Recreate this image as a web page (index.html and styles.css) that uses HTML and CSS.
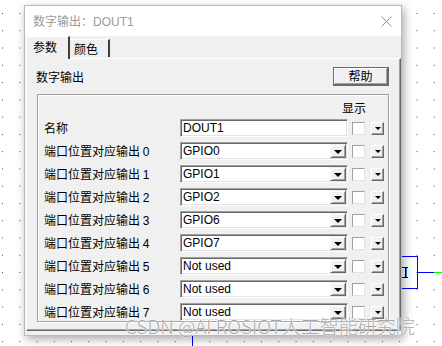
FILE: index.html
```html
<!DOCTYPE html>
<html lang="zh-CN">
<head>
    <meta charset="UTF-8">
    <title>数字输出：DOUT1</title>
    <link rel="stylesheet" href="styles.css">
</head>
<body>
    <svg class="canvas" width="442" height="346" viewBox="0 0 442 346">
        <defs>
            <pattern id="dots" x="2" y="13" width="17.27" height="17.27" patternUnits="userSpaceOnUse">
                <rect x="0" y="0" width="1" height="1" fill="#008000"/>
            </pattern>
        </defs>
        <rect width="442" height="346" fill="url(#dots)" shape-rendering="crispEdges"/>
        <g shape-rendering="crispEdges" stroke-width="1" fill="none">
            <path d="M400 256.5H417.5V288.5H400" stroke="#0000ff"/>
            <path d="M417.5 272.5H434" stroke="#0000ff"/>
            <path d="M434 272.5H442" stroke="#00ff00"/>
            <path d="M192.5 330V346" stroke="#0000ff"/>
            <path d="M402 267.5H408M405.5 267V278M402 277.5H408" stroke="#000"/>
            <path d="M406.5 268V277" stroke="#2080ff"/>
        </g>
    </svg>

    <div class="dialog">
        <div class="titlebar">
            <span class="title">数字输出：DOUT1</span>
            <svg class="close" width="11" height="11" viewBox="0 0 11 11">
                <path d="M0.5 0.5L10.5 10.5M10.5 0.5L0.5 10.5" stroke="#8c8c8c" stroke-width="1"/>
            </svg>
        </div>
        <div class="dlg-body">
            <div class="tabs">
                <div class="tab active">参数</div>
                <div class="tab">颜色</div>
            </div>
            <div class="panel">
                <div class="panel-head">
                    <span class="caption">数字输出</span>
                    <button class="btn">帮助</button>
                </div>
                <div class="group">
                    <div class="show-head">显示</div>
                    <div class="rows">
                        <div class="label">名称</div>
                        <div class="edit"><span class="val">DOUT1</span></div>
                        <div class="check"></div>
                        <div class="mini"><i></i></div>

                        <div class="label">端口位置对应输出 <span class="num">0</span></div>
                        <div class="edit combo"><span class="val">GPIO0</span><span class="drop"><i></i></span></div>
                        <div class="check"></div>
                        <div class="mini"><i></i></div>

                        <div class="label">端口位置对应输出 <span class="num">1</span></div>
                        <div class="edit combo"><span class="val">GPIO1</span><span class="drop"><i></i></span></div>
                        <div class="check"></div>
                        <div class="mini"><i></i></div>

                        <div class="label">端口位置对应输出 <span class="num">2</span></div>
                        <div class="edit combo"><span class="val">GPIO2</span><span class="drop"><i></i></span></div>
                        <div class="check"></div>
                        <div class="mini"><i></i></div>

                        <div class="label">端口位置对应输出 <span class="num">3</span></div>
                        <div class="edit combo"><span class="val">GPIO6</span><span class="drop"><i></i></span></div>
                        <div class="check"></div>
                        <div class="mini"><i></i></div>

                        <div class="label">端口位置对应输出 <span class="num">4</span></div>
                        <div class="edit combo"><span class="val">GPIO7</span><span class="drop"><i></i></span></div>
                        <div class="check"></div>
                        <div class="mini"><i></i></div>

                        <div class="label">端口位置对应输出 <span class="num">5</span></div>
                        <div class="edit combo"><span class="val">Not used</span><span class="drop"><i></i></span></div>
                        <div class="check"></div>
                        <div class="mini"><i></i></div>

                        <div class="label">端口位置对应输出 <span class="num">6</span></div>
                        <div class="edit combo"><span class="val">Not used</span><span class="drop"><i></i></span></div>
                        <div class="check"></div>
                        <div class="mini"><i></i></div>

                        <div class="label">端口位置对应输出 <span class="num">7</span></div>
                        <div class="edit combo"><span class="val">Not used</span><span class="drop"><i></i></span></div>
                        <div class="check"></div>
                        <div class="mini"><i></i></div>
                    </div>
                </div>
            </div>
        </div>
    </div>

    <div class="watermark">CSDN @AI ROSIOT人工智能研究院</div>
</body>
</html>
```

FILE: styles.css
```css
*{
    margin:0;
    padding:0;
    box-sizing:border-box;
}
body{
    width:442px;
    height:346px;
    overflow:hidden;
    background-color:#fff;
    font-family:"Liberation Sans","Noto Sans CJK SC",sans-serif;
    font-size:12px;
    color:#000;
    position:relative;
}
.canvas{
    position:absolute;
    left:0;
    top:0;
}

/* dialog window */
.dialog{
    position:absolute;
    left:24px;
    top:5px;
    width:378px;
    height:331px;
    border:1px solid #b9b9b9;
    background:#f0f0f0;
    box-shadow:2px 3px 9px rgba(0,0,0,0.35);
    display:flex;
    flex-direction:column;
}
.titlebar{
    height:30px;
    background:#fff;
    display:flex;
    align-items:center;
    justify-content:space-between;
    padding:0 9px 0 8px;
}
.title{
    color:#9a9a9a;
    font-size:12px;
    line-height:14px;
    padding-top:1px;
}
.close{
    display:block;
}
.dlg-body{
    flex:1;
    display:flex;
    flex-direction:column;
    padding:0 0 4px 1px;
}

/* tabs */
.tabs{
    height:22px;
    display:flex;
    align-items:flex-end;
    position:relative;
    z-index:1;
}
.tab{
    height:18px;
    width:40px;
    border-top:1px solid #fff;
    border-right:2px solid #404040;
    padding-left:4px;
    line-height:17px;
    margin-bottom:1px;
    font-family:"Noto Sans CJK SC",sans-serif;
}
.tab.active{
    height:23px;
    width:44px;
    margin-bottom:-1px;
    border-left:1px solid #fff;
    padding-left:6px;
    line-height:20px;
    background:#f0f0f0;
}

/* tab page */
.panel{
    flex:1;
    border-top:1px solid #fff;
    border-left:1px solid #fff;
    border-right:1px solid #696969;
    border-bottom:1px solid #696969;
    box-shadow:inset -1px -1px 0 #a0a0a0;
    padding:8px 11px 0 9px;
}
.panel-head{
    height:19px;
    display:flex;
    align-items:center;
    justify-content:space-between;
}
.caption{
    font-family:"Noto Sans CJK SC",sans-serif;
    line-height:14px;
}
.btn{
    width:56px;
    height:19px;
    background:#f0f0f0;
    border-style:solid;
    border-color:#6a6a6a;
    border-width:1px 2px 2px 1px;
    box-shadow:inset 1px 1px 0 #fff, inset -1px -1px 0 #a0a0a0;
    font-family:"Noto Sans CJK SC",sans-serif;
    font-size:12px;
    line-height:14px;
    color:#000;
}
.group{
    margin:8px 0 0 1px;
    height:228px;
    border:1px solid #a0a0a0;
    box-shadow:inset 1px 1px 0 #fff, 1px 1px 0 #fff;
    overflow:hidden;
}
.show-head{
    height:24px;
    line-height:26px;
    padding-left:304px;
    font-family:"Noto Sans CJK SC",sans-serif;
}
.rows{
    display:grid;
    grid-template-columns:132px 168px 13px 15px;
    grid-auto-rows:18px;
    column-gap:4px;
    row-gap:5px;
    padding-left:6px;
}
.label{
    align-self:center;
    line-height:14px;
    white-space:nowrap;
    font-family:"Noto Sans CJK SC",sans-serif;
}
.num{
    font-family:"Liberation Sans",sans-serif;
}

/* edit and combo boxes */
.edit{
    height:18px;
    background:#fff;
    border:1px solid;
    border-color:#a0a0a0 #fff #fff #a0a0a0;
    box-shadow:inset 1px 1px 0 #696969, inset -1px -1px 0 #e3e3e3;
    padding:1px;
    display:flex;
    align-items:center;
}
.val{
    flex:1;
    padding-left:1px;
    line-height:14px;
    white-space:nowrap;
    overflow:hidden;
}
.drop{
    width:16px;
    height:14px;
    background:#f0f0f0;
    border:1px solid;
    border-color:#f0f0f0 #696969 #696969 #f0f0f0;
    box-shadow:inset 1px 1px 0 #fff, inset -1px -1px 0 #a0a0a0;
    display:flex;
    align-items:center;
    justify-content:center;
    padding-top:2px;
}
.drop i{
    display:block;
    width:0;
    height:0;
    border-left:4px solid transparent;
    border-right:4px solid transparent;
    border-top:4px solid #000;
}
.check{
    width:13px;
    height:13px;
    align-self:center;
    background:#fff;
    border:1px solid;
    border-color:#a0a0a0 #e3e3e3 #e3e3e3 #a0a0a0;
}
.mini{
    width:13px;
    height:13px;
    align-self:center;
    justify-self:end;
    background:#f0f0f0;
    border:1px solid;
    border-color:#fff #696969 #696969 #fff;
    box-shadow:inset -1px -1px 0 #a0a0a0;
    display:flex;
    align-items:center;
    justify-content:center;
}
.mini i{
    display:block;
    width:0;
    height:0;
    border-left:3px solid transparent;
    border-right:3px solid transparent;
    border-top:3px solid #000;
}

.watermark{
    position:absolute;
    left:125px;
    top:312px;
    font-family:"Noto Sans CJK SC",sans-serif;
    font-weight:300;
    font-size:19px;
    line-height:28px;
    color:rgba(140,140,140,0.75);
    text-shadow:0 0 1px #fff, 0 0 2px #fff;
    white-space:nowrap;
}
```
